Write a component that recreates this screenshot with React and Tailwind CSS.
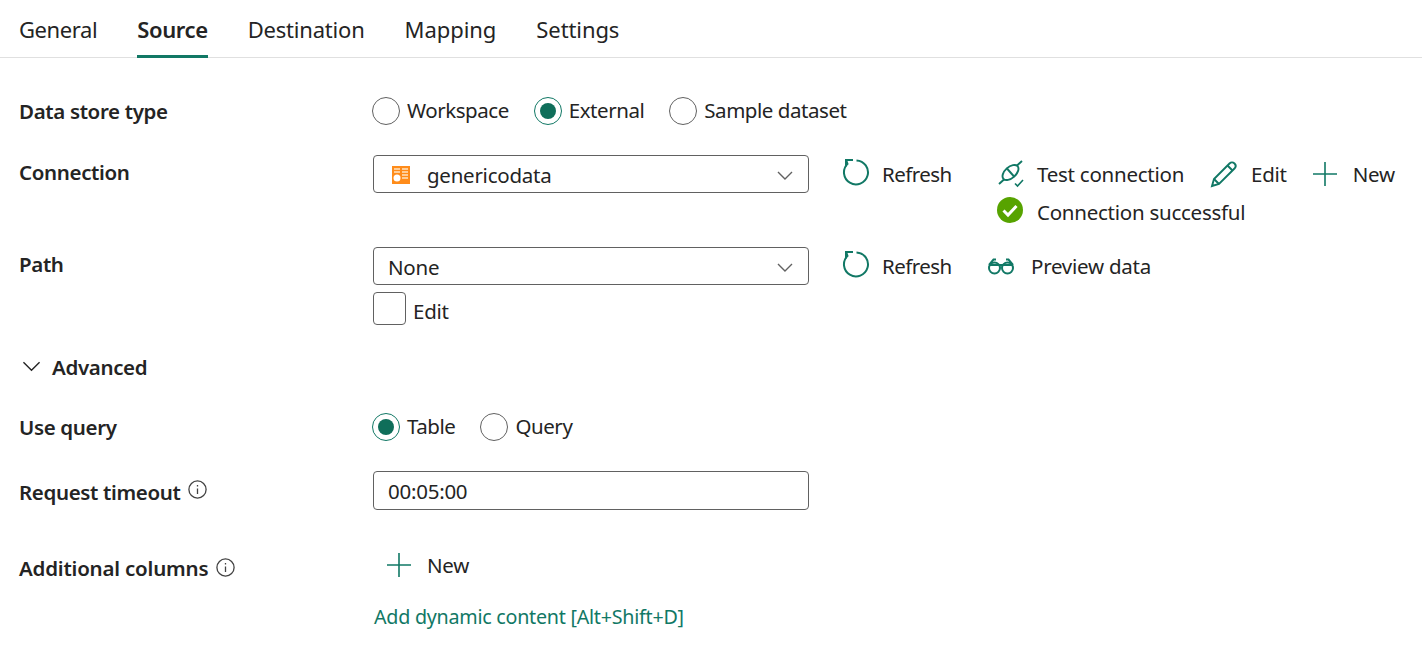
const teal = '#117865';

function RefreshIcon() {
  return (
    <svg width="28" height="28" viewBox="0 0 28 28" fill="none" stroke={teal} strokeWidth="2" className="-mt-[4px] shrink-0">
      <path d="M4.500 3L5.500 5.900A12 12 0 1 0 14.500 2.400" />
      <path d="M4 8.500V2h7" />
    </svg>
  );
}

function PlusIcon() {
  return (
    <svg width="26" height="26" viewBox="0 0 26 26" fill="none" stroke={teal} strokeWidth="1.6" className="shrink-0">
      <path d="M13 1v24M1 13h24" />
    </svg>
  );
}

function PlugIcon() {
  return (
    <svg width="28" height="28" viewBox="0 0 28 28" fill="none" stroke={teal} strokeWidth="1.9" className="shrink-0">
      <path d="M2 24l5-4.500M20 5.500l5-4.500" />
      <ellipse cx="13.500" cy="12.500" rx="9.500" ry="5.500" transform="rotate(-42 13.500 12.500)" />
      <path d="M9.500 8l8 9" />
      <path d="M18 23.500l2.500 2.500 5.500-6" strokeWidth="1.600" />
    </svg>
  );
}

function PencilIcon() {
  return (
    <svg width="28" height="28" viewBox="0 0 28 28" fill="none" stroke={teal} strokeWidth="1.9" className="shrink-0">
      <path d="M2 26l2-7L19.500 3.500c1.500-1.500 3.500-1.500 5 0s1.500 3.500 0 5L9 24z" />
      <path d="M17.500 5.500l5 5M4 19l5 5" />
    </svg>
  );
}

function GlassesIcon() {
  return (
    <svg width="28" height="18" viewBox="0 0 28 18" fill="none" stroke={teal} strokeWidth="2" className="shrink-0">
      <circle cx="7.500" cy="11" r="5.500" />
      <circle cx="20.500" cy="11" r="5.500" />
      <path d="M2 8h24M2 8l4.500-5.500H9M26 8l-4.500-5.500H19" />
    </svg>
  );
}

function CheckCircle() {
  return (
    <svg width="26" height="26" viewBox="0 0 26 26" className="-mt-[4px] shrink-0">
      <circle cx="13" cy="13" r="13" fill="#57a300" />
      <path d="M6.500 13.500l4.500 4.500 8.500-9" fill="none" stroke="#fff" strokeWidth="3" />
    </svg>
  );
}

function Chevron({ size = 16, color = '#616161', sw = 1.4 }) {
  return (
    <svg width={size} height={size / 2 + 2} viewBox="0 0 16 10" fill="none" stroke={color} strokeWidth={sw} className="shrink-0">
      <path d="M1 1l7 7 7-7" />
    </svg>
  );
}

function InfoIcon({ className = '' }) {
  return (
    <svg width="19" height="19" viewBox="0 0 19 19" fill="none" stroke="#424242" strokeWidth="1.300" className={`shrink-0 ${className}`}>
      <circle cx="9.500" cy="9.500" r="8.600" />
      <path d="M9.500 8.500v5.500M9.500 5v1.500" />
    </svg>
  );
}

function ConnectorLogo() {
  return (
    <svg width="18" height="18" viewBox="0 0 18 18" className="mt-[2px] shrink-0">
      <rect width="18" height="18" fill="#ff8c1a" />
      <path d="M2 3h6M2 6h6M10 3h6M10 6h6M10 9h6M10 12h6" stroke="#ffe3c2" strokeWidth="1.500" />
      <circle cx="5" cy="12" r="3.500" fill="#fff" />
    </svg>
  );
}

function Radio({ label, checked }) {
  return (
    <div className="flex items-center gap-[7px]">
      <div className={`flex h-[28px] w-[28px] items-center justify-center rounded-full border bg-white ${checked ? 'border-[#117865]' : 'border-[#616161]'}`}>
        {checked && <div className="h-[16px] w-[16px] rounded-full bg-[#0f6e5a]" />}
      </div>
      <span className="-mt-[2px] tracking-[-0.45px]">{label}</span>
    </div>
  );
}

function Label({ children, className = '' }) {
  return <div className={`w-[354px] shrink-0 font-semibold tracking-[-0.35px] ${className}`}>{children}</div>;
}

function Select({ children }) {
  return (
    <div className="flex h-[38px] w-[436px] items-center justify-between rounded-[4px] border border-[#616161] pl-[14px] pr-[15px]">
      <div className="flex items-center">{children}</div>
      <div className="pt-[3px]">
        <Chevron />
      </div>
    </div>
  );
}

function Action({ icon, label, gap, className = '' }) {
  return (
    <div className={`flex items-center ${className}`} style={{ gap }}>
      {icon}
      <span>{label}</span>
    </div>
  );
}

export default function App() {
  return (
    <div className="h-[645px] w-[1422px] overflow-hidden bg-white pl-[19px] text-[20.5px] leading-[30px] tracking-[-0.25px] text-[#242424] [font-family:'Noto_Sans',sans-serif]">
      <div className="-ml-[19px] flex h-[58px] gap-[40px] border-b border-[#e0e0e0] pl-[19px] text-[22px] tracking-[-0.4px]">
        <div className="pt-[14px]">General</div>
        <div className="h-[58px] border-b-[3px] border-[#117865] pt-[14px] font-semibold">Source</div>
        <div className="pt-[14px] tracking-[-0.2px]">Destination</div>
        <div className="pt-[14px] tracking-[-0.05px]">Mapping</div>
        <div className="pt-[14px] tracking-[-0.1px]">Settings</div>
      </div>

      <div className="mt-[37px] flex h-[31px] items-center">
        <Label className="pt-[1px]">Data store type</Label>
        <div className="-ml-[1px] flex gap-[25px]">
          <Radio label="Workspace" />
          <Radio label="External" checked />
          <Radio label="Sample dataset" />
        </div>
      </div>

      <div className="mt-[29px] flex h-[92px]">
        <Label className="pt-[2px]">Connection</Label>
        <Select>
          <div className="ml-[4px]">
            <ConnectorLogo />
          </div>
          <span className="ml-[17px] pt-[2px]">genericodata</span>
        </Select>
        <div className="ml-[33px] flex h-[38px] w-[109px] items-center self-start tracking-[-0.55px]">
          <Action icon={<RefreshIcon />} label="Refresh" gap="12px" />
        </div>
        <div className="ml-[46px]">
          <div className="flex h-[38px] items-center gap-[26px]">
            <Action icon={<PlugIcon />} label="Test connection" gap="12px" />
            <Action icon={<PencilIcon />} label="Edit" gap="13px" />
            <Action icon={<PlusIcon />} label="New" gap="15px" className="-ml-[1px]" />
          </div>
          <Action icon={<CheckCircle />} label="Connection successful" gap="14px" className="mt-[4px]" />
        </div>
      </div>

      <div className="flex">
        <Label className="pt-[2px]">Path</Label>
        <div>
          <Select>
            <span className="pt-[1px]">None</span>
          </Select>
          <div className="mt-[7px] flex items-start gap-[7px]">
            <div className="h-[33px] w-[33px] rounded-[4px] border border-[#616161]" />
            <span className="pt-[5px] leading-[28px]">Edit</span>
          </div>
        </div>
        <div className="ml-[33px] flex h-[38px] items-center">
          <div className="w-[109px] tracking-[-0.55px]">
            <Action icon={<RefreshIcon />} label="Refresh" gap="12px" />
          </div>
          <Action icon={<GlassesIcon />} label="Preview data" gap="16px" className="ml-[36px]" />
        </div>
      </div>

      <div className="mt-[27px] flex h-[30px] items-center gap-[11px] pl-[3px] font-semibold tracking-[-0.35px]">
        <Chevron size={19} color="#242424" sw={1.2} />
        <span className="-mt-[1px]">Advanced</span>
      </div>

      <div className="mt-[30px] flex h-[30px] items-center">
        <Label>Use query</Label>
        <div className="-ml-[1px] flex gap-[25px]">
          <Radio label="Table" checked />
          <Radio label="Query" />
        </div>
      </div>

      <div className="mt-[29px] flex h-[39px]">
        <Label>
          <div className="flex items-start gap-[8px] pt-[6px]">
            <span>Request timeout</span>
            <InfoIcon className="mt-[3px]" />
          </div>
        </Label>
        <div className="flex h-[39px] w-[436px] items-center rounded-[4px] border border-[#616161] pl-[14px]">00:05:00</div>
      </div>

      <div className="mt-[37px] flex h-[36px]">
        <Label>
          <div className="flex items-start gap-[8px] pt-[6px]">
            <span className="tracking-[-0.2px]">Additional columns</span>
            <InfoIcon className="mt-[5px]" />
          </div>
        </Label>
        <div className="flex items-center gap-[15px] pl-[13px]">
          <PlusIcon />
          <span>New</span>
        </div>
      </div>

      <div className="mt-[19px] pl-[355px] text-[19.7px] text-[#117865]">Add dynamic content [Alt+Shift+D]</div>
    </div>
  );
}
